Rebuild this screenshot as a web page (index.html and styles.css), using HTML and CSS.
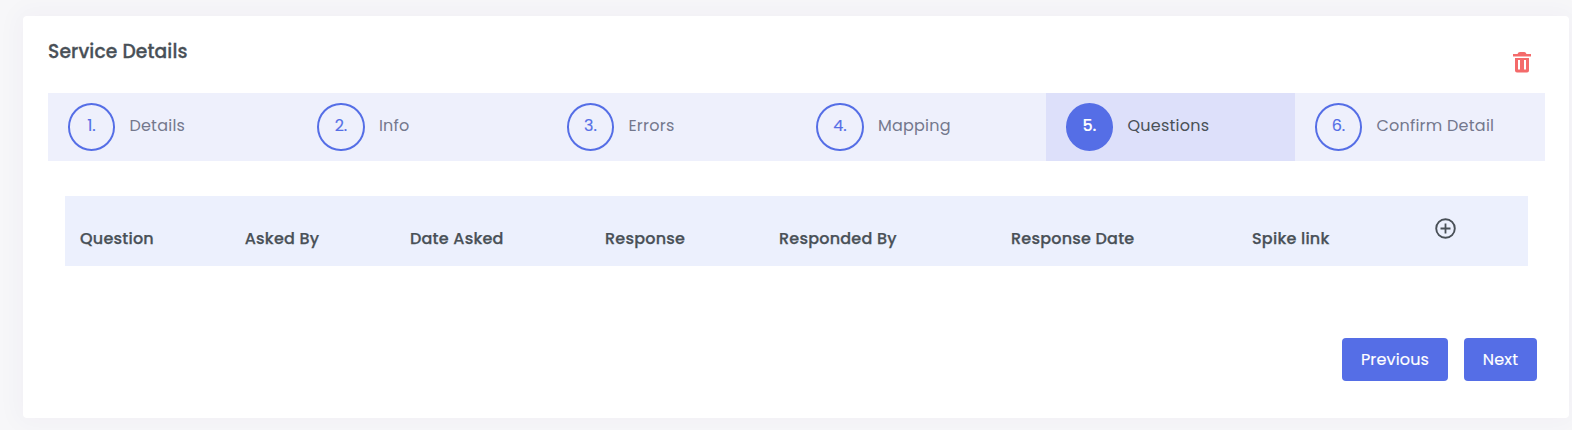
FILE: index.html
```html
<!DOCTYPE html>
<html lang="en">
<head>
<meta charset="utf-8">
<title>Service Details</title>
<link rel="stylesheet" href="styles.css">
</head>
<body>
<main class="card">
  <header class="card-header">
    <h1 class="card-title">Service Details</h1>
    <button class="icon-button delete" aria-label="Delete service">
      <svg width="18" height="21" viewBox="0 0 18 21"><path fill="#f46a6a" d="M4.500 2Q5 0 7 0h4q2 0 2.500 2H18v2H0V2z"/><path fill="#f9b9b9" d="M0 4h18v1H0z"/><path fill="#f46a6a" fill-rule="evenodd" d="M2 6h14v12.500q0 2-2 2H4q-2 0-2-2zM5 8v9.500h2V8zm6 0v9.500h2V8z"/></svg>
    </button>
  </header>
  <ol class="steps">
    <li class="step"><span class="step-number">1.</span><span class="step-label">Details</span></li>
    <li class="step"><span class="step-number">2.</span><span class="step-label">Info</span></li>
    <li class="step"><span class="step-number">3.</span><span class="step-label">Errors</span></li>
    <li class="step"><span class="step-number">4.</span><span class="step-label">Mapping</span></li>
    <li class="step active"><span class="step-number">5.</span><span class="step-label">Questions</span></li>
    <li class="step"><span class="step-number">6.</span><span class="step-label">Confirm Detail</span></li>
  </ol>
  <div class="table-head">
    <span class="cell">Question</span>
    <span class="cell">Asked By</span>
    <span class="cell">Date Asked</span>
    <span class="cell">Response</span>
    <span class="cell">Responded By</span>
    <span class="cell">Response Date</span>
    <span class="cell">Spike link</span>
    <button class="icon-button add" aria-label="Add question">
      <svg width="21" height="21" viewBox="0 0 21 21" fill="none" stroke="#495057"><circle cx="10.500" cy="10.500" r="9.300" stroke-width="1.900"/><path stroke-width="1.800" d="M10.500 5.500v10M5.500 10.500h10"/></svg>
    </button>
  </div>
  <footer class="actions">
    <button class="button previous">Previous</button>
    <button class="button next">Next</button>
  </footer>
</main>
</body>
</html>
```

FILE: styles.css
```css
* { box-sizing: border-box; }
body {
  margin: 0;
  height: 430px;
  padding: 16px 3px 12px 23px;
  overflow: hidden;
  background: #f7f7f9;
  color: #495057;
  font: 16px/24px Poppins, Inter, sans-serif;
}
.card {
  height: 402px;
  padding: 0 24px 0 25px;
  border-radius: 4px;
  background: #fff;
  box-shadow: 0 0 24px 6px rgba(48, 18, 123, .03);
}
.card-header {
  display: flex;
  justify-content: space-between;
  height: 77px;
  padding: 24px 14px 0 0;
}
.card-title {
  margin: 0;
  font-size: 18.720px;
  line-height: 24px;
  font-weight: 500;
  letter-spacing: .13px;
  -webkit-text-stroke: .3px;
}
.icon-button { padding: 0; border: 0; background: none; line-height: 0; }
.delete { height: 21px; margin-top: 12px; }
.steps {
  display: grid;
  grid-template-columns: repeat(4, 249.500px) 249px 1fr;
  height: 68px;
  margin: 0;
  padding: 0;
  list-style: none;
  background: #eef0fc;
}
.step { display: flex; gap: 14.300px; padding: 10px 20px 10px 19.800px; color: #74788d; }
.step-number {
  width: 47.300px;
  height: 48px;
  border: 2px solid #556ee6;
  border-radius: 50%;
  color: #556ee6;
  line-height: 42px;
  text-align: center;
  -webkit-text-stroke: .15px;
}
.step-label { line-height: 46px; letter-spacing: .24px; }
.active { background: #dde0fa; color: #495057; }
.active .step-number { background: #556ee6; color: #fff; font-weight: 500; }
.table-head {
  display: grid;
  grid-template-columns: 164.700px 165.300px 195px 174px 232px 241px 183px 1fr;
  height: 70px;
  margin: 35px 17px 0;
  padding-left: 15px;
  background: #ecf0fd;
  font-weight: 500;
  letter-spacing: .22px;
}
.cell { padding-top: 30px; line-height: 25px; -webkit-text-stroke: .25px; }
.add { justify-self: start; height: 21px; margin-top: 22px; color: #495057; }
.actions { display: flex; justify-content: flex-end; gap: 16px; padding: 72px 8px 0 0; }
.button {
  height: 43px;
  padding: 0;
  border: 0;
  border-radius: 4px;
  background: #556ee6;
  color: #fff;
  font: inherit;
  letter-spacing: .15px;
  -webkit-text-stroke: .15px;
}
.previous { width: 106px; }
.next { width: 73px; }
```
